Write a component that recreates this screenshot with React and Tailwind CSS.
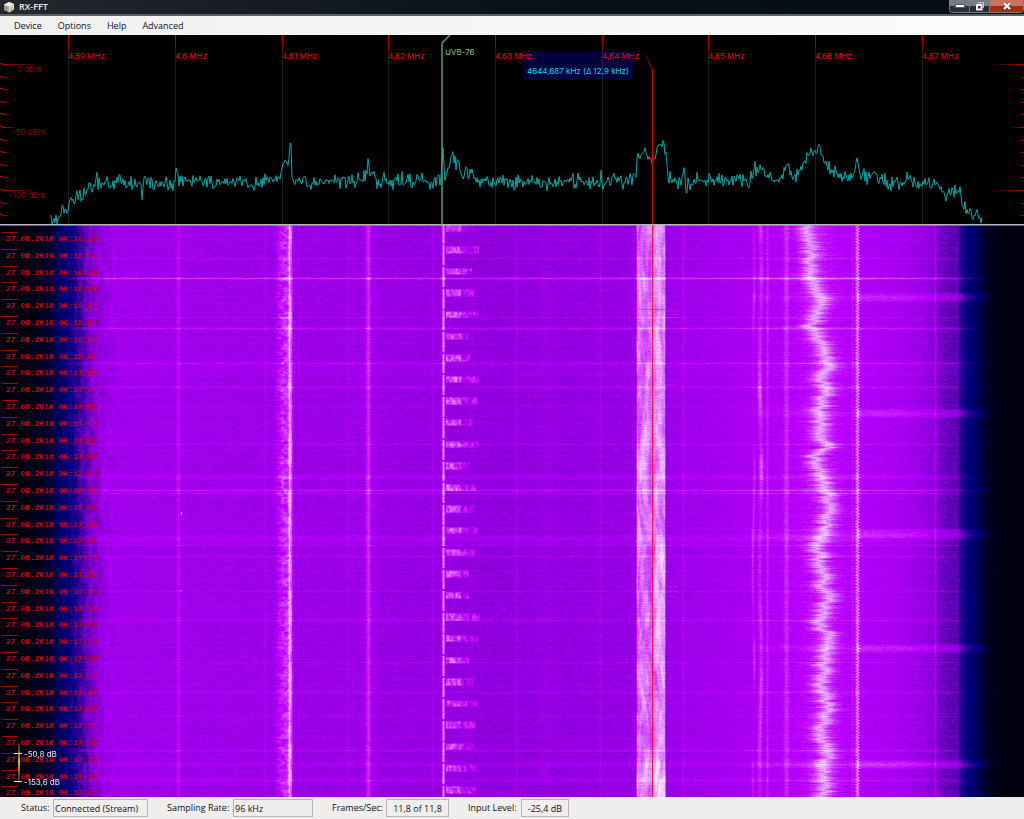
import { useLayoutEffect, useRef } from "react";

const WIDTH = 1024;
const FALL_HEIGHT = 572;

const menus = ["Device", "Options", "Help", "Advanced"];

const frequencies = [
  { x: 68, label: "4,59 MHz" },
  { x: 175, label: "4,6 MHz" },
  { x: 282, label: "4,61 MHz" },
  { x: 388, label: "4,62 MHz" },
  { x: 495, label: "4,63 MHz" },
  { x: 602, label: "4,64 MHz" },
  { x: 708, label: "4,65 MHz" },
  { x: 815, label: "4,66 MHz" },
  { x: 922, label: "4,67 MHz" },
];

const levels = [
  { x: 17, y: 37, label: "0 dBm" },
  { x: 12, y: 100, label: "-50 dBm" },
  { x: 9, y: 163, label: "-100 dBm" },
];

// small seeded generator so every render looks the same
function makeRandom(seed) {
  let s = seed;
  return () => {
    s = (s + 0x6d2b79f5) | 0;
    let t = Math.imul(s ^ (s >>> 15), 1 | s);
    t = (t + Math.imul(t ^ (t >>> 7), 61 | t)) ^ t;
    return ((t ^ (t >>> 14)) >>> 0) / 4294967296;
  };
}

function hash(x, y) {
  let h = Math.imul(x, 374761393) + Math.imul(y, 668265263);
  h = Math.imul(h ^ (h >>> 13), 1274126177);
  return ((h ^ (h >>> 16)) >>> 0) / 4294967296;
}

// smooth 2d noise between 0 and 1
function cloud(x, y) {
  const ix = Math.floor(x);
  const iy = Math.floor(y);
  const fx = (x - ix) ** 2 * (3 - 2 * (x - ix));
  const fy = (y - iy) ** 2 * (3 - 2 * (y - iy));
  const top = hash(ix, iy) * (1 - fx) + hash(ix + 1, iy) * fx;
  const bottom = hash(ix, iy + 1) * (1 - fx) + hash(ix + 1, iy + 1) * fx;
  return top * (1 - fy) + bottom * fy;
}

function interpolate(points, x) {
  if (x <= points[0][0]) return points[0][1];
  for (let i = 1; i < points.length; i++) {
    if (x <= points[i][0]) {
      const [x0, y0] = points[i - 1];
      const [x1, y1] = points[i];
      return y0 + ((y1 - y0) * (x - x0)) / (x1 - x0);
    }
  }
  return points[points.length - 1][1];
}

const bump = (x, center, width) => Math.exp(-((x - center) ** 2) / (2 * width * width));

// signal level over x, y measured from the top of the spectrum
const spectrum = [
  [51, 189], [55, 185], [58, 188], [60, 179], [66, 173], [70, 169], [75, 164], [80, 161],
  [83, 159], [87, 149], [92, 150], [97, 147], [103, 145], [115, 148], [141, 148], [142, 164],
  [144, 142], [148, 146], [160, 148], [175, 147], [177, 135], [179, 146], [220, 147], [240, 146],
  [262, 149], [270, 142], [279, 148], [281, 137], [283, 130], [285, 126], [288, 131], [289, 124],
  [290, 107], [291, 108], [292, 141], [300, 147], [320, 145], [350, 147], [363, 143], [369, 130],
  [373, 143], [385, 147], [400, 146], [430, 147], [441, 141], [443, 114], [445, 145], [449, 130],
  [452, 122], [456, 128], [459, 126], [462, 143], [468, 138], [472, 136], [478, 144], [500, 147],
  [600, 147], [601, 138], [603, 147], [634, 146], [636, 136], [638, 121], [641, 123], [644, 114],
  [648, 122], [652, 126], [655, 122], [658, 113], [661, 109], [664, 109], [666, 120], [668, 143],
  [672, 147], [682, 145], [684, 134], [686, 155], [688, 147], [720, 145], [750, 147], [755, 134],
  [760, 133], [766, 141], [775, 146], [782, 141], [787, 128], [792, 140], [800, 139], [803, 131],
  [807, 121], [812, 118], [818, 110], [821, 118], [826, 127], [832, 139], [845, 142], [852, 144],
  [855, 136], [857, 123], [860, 141], [875, 143], [890, 147], [905, 146], [920, 148], [930, 152],
  [937, 147], [941, 160], [950, 158], [957, 155], [960, 157], [962, 170], [967, 177], [972, 179],
  [977, 182], [982, 189],
];

// peaks that must not be blurred by the noise
const steady = [[140, 144], [280, 292], [441, 445], [855, 859]];

function buildTrace() {
  const random = makeRandom(7);
  const points = [];
  for (let x = 51; x <= 982; x++) {
    const quiet = steady.some(([from, to]) => x >= from && x <= to) ? 2 : x > 636 && x < 668 ? 6 : 10;
    const noise = (random() + random() - 1) * quiet;
    points.push(`${x},${Math.min(189, interpolate(spectrum, x) + noise).toFixed(1)}`);
  }
  return points.join(" ");
}

const trace = buildTrace();

const colors = [
  [0, [0, 0, 12]],
  [0.1, [0, 0, 50]],
  [0.2, [0, 0, 125]],
  [0.26, [25, 0, 135]],
  [0.42, [130, 0, 208]],
  [0.5, [158, 0, 236]],
  [0.6, [186, 0, 255]],
  [0.72, [205, 55, 255]],
  [0.85, [225, 135, 255]],
  [1, [252, 225, 255]],
];

const palette = Array.from({ length: 256 }, (_, i) =>
  [0, 1, 2].map((c) => interpolate(colors.map(([v, rgb]) => [v, rgb[c]]), i / 255))
);

// noise floor of the receiver
const floor = [
  [0, 0], [25, 0.01], [42, 0.05], [54, 0.13], [64, 0.19], [74, 0.26], [86, 0.37], [98, 0.46],
  [112, 0.51], [200, 0.5], [330, 0.49], [420, 0.475], [500, 0.46], [625, 0.475], [670, 0.495],
  [740, 0.53], [790, 0.565], [825, 0.6], [850, 0.56], [900, 0.53], [925, 0.48], [935, 0.42],
  [952, 0.36], [958, 0.31], [963, 0.24], [970, 0.19], [980, 0.13], [990, 0.05], [1000, 0.01],
  [1024, 0.01],
];

// [x, width, gain]
const carriers = [
  [178, 1.5, 0.11], [265, 0.8, 0.05], [348, 0.8, 0.04], [353, 0.8, 0.03], [368, 1.6, 0.1],
  [368, 5, 0.03], [432, 0.8, 0.05], [472, 0.7, 0.02], [516, 0.8, 0.06], [545, 5, 0.02],
  [600, 0.8, 0.06], [683, 0.8, 0.08], [767, 1, 0.11], [786, 1.8, 0.12], [852, 0.9, 0.07],
  [935, 0.9, 0.12], [956, 1.6, 0.05],
];

// [y, width, gain]
const flashes = [
  [33, 0.5, 0.06], [53, 0.8, 0.2], [92, 0.5, 0.05], [103, 0.9, 0.12], [138, 0.7, 0.11],
  [146, 5, 0.025], [162, 1, 0.07], [181, 0.6, 0.04], [219, 0.7, 0.07], [252, 1.6, 0.07],
  [265, 0.7, 0.14], [268, 0.6, 0.1], [313, 2.4, 0.07], [320, 0.6, 0.07], [331, 0.8, 0.06],
  [366, 0.6, 0.04], [395, 0.6, 0.07], [437, 0.6, 0.06], [467, 0.9, 0.06], [491, 0.6, 0.03],
  [525, 0.7, 0.07], [539, 1, 0.06], [555, 0.8, 0.07],
];

// slow drift of the wide signal around 4,66 MHz
const drift = [
  [0, 808], [20, 812], [35, 811], [48, 807], [62, 815], [78, 823], [88, 816], [100, 809],
  [114, 818], [128, 823], [140, 830], [150, 820], [165, 824], [175, 820], [195, 819], [212, 821],
  [222, 826], [230, 815], [250, 821], [270, 827], [300, 829], [310, 821], [330, 816], [350, 823],
  [375, 828], [390, 823], [397, 817], [410, 831], [425, 822], [445, 824], [465, 821], [480, 827],
  [505, 820], [530, 825], [550, 821], [572, 825],
];

function drawWaterfall(canvas) {
  const ctx = canvas.getContext("2d");
  const image = ctx.createImageData(WIDTH, FALL_HEIGHT);
  const random = makeRandom(2010);
  const xFloor = Array.from({ length: WIDTH }, (_, x) => {
    let v = interpolate(floor, x);
    carriers.forEach(([cx, w, gain]) => (v += gain * bump(x, cx, w)));
    return v;
  });
  let wander = 0;
  let keyed = 0;

  for (let y = 0; y < FALL_HEIGHT; y++) {
    let row = (random() - 0.5) * 0.026;
    flashes.forEach(([fy, w, gain]) => (row += gain * bump(y, fy, w)));
    wander = wander * 0.4 + (random() - 0.5) * 11;
    const center = interpolate(drift, y) + wander * 0.6 + (cloud(40, y / 5) - 0.5) * 6;
    const tailLeft = 6 + random() * 13;
    const tailRight = 6 + random() * 13;
    const burst = (y + 1) % 21.6;
    const burstOn = burst < 7.5;
    if (Math.floor(burst) === 0) keyed = random() * 12;
    const beat = y % 3 === 0 ? 1 : -0.5;
    const smear = (random() - 0.5) * 3;
    let grain = 0;

    for (let x = 0; x < WIDTH; x++) {
      grain = grain * 0.35 + (random() - 0.5) * 0.065;
      const inside = Math.min(1, Math.max(0, (x - 30) / 75)) * Math.min(1, Math.max(0, (1000 - x) / 60));
      let v = xFloor[x] + row * inside + grain * (0.35 + 0.65 * inside);

      // soft ripples on the left slope
      if (x > 64 && x < 116) v += 0.09 * (cloud(x / 3, y / 14) - 0.5);

      // smeared signal left of its carrier
      if (x > 270 && x < 290) {
        const body = Math.min(1, Math.max(0, (x - 273 + smear) / 9));
        v += body * (0.08 + 0.2 * cloud(x / 3 + smear * 0.2, y / 2.5));
      }
      v += (0.28 + 0.16 * cloud(3, y / 9)) * bump(x, 290, 1.4);
      if (x > 360 && x < 376) v += 0.08 * bump(x, 368 + beat, 1.8);

      // station marker carrier and its pulses
      const gap = burst > 19.3 && burst < 21;
      v += (gap ? 0.16 : 0.4) * bump(x, 443, 1.1);
      if (burstOn && x > 445 && x < 468 + keyed) {
        const wave = cloud(x / 2, y / 4) - 0.5;
        const edge = burst < 1 || burst > 6.5 ? 0.7 : 1;
        v += edge * (x < 461 ? 0.26 + wave * 0.22 : 0.14 + wave * 0.24);
      }

      // wide modulated band
      if (x >= 636 && x <= 665) {
        const bend = Math.sin(y / 29) * 2.5 + Math.sin(y / 13);
        const wide = cloud((x + bend) / 5, y / 30) - 0.5;
        const fine = cloud((x + bend) / 2.2 + 90, y / 12) - 0.5;
        const side = x === 636 || x === 665 ? 0.14 : 0.33;
        v += side + wide * 0.17 + fine * 0.12;
        v += 0.04 * bump(x, 660, 4) + 0.09 * bump(y, 560, 16);
        v -= 0.05 * bump(x, 650, 1.5);
      }
      // faint splatter beside the band
      if (x > 665 && x < 678 && [86, 89, 92, 155, 159, 361, 366, 371].includes(y)) v += 0.1;

      if (x > 745 && x < 775) {
        const bend = Math.sin(y / 31) * 0.8;
        v += 0.16 * cloud(1, y / 40) * bump(x, 753 + bend, 1);
        v += (0.09 + 0.17 * cloud(9, y / 24)) * bump(x, 760 + bend, 1.6);
      }

      // the drifting signal
      const d = x - center;
      const tail = d < 0 ? tailLeft : tailRight;
      v += 0.19 * bump(d, 0, 6.5) + 0.11 * Math.exp(-Math.abs(d) / tail);

      v += 0.27 * bump(x, 857 + beat * 0.8, 1.3);

      // periodic bursts on the right
      if (x > 750) {
        const near = Math.min(...[72, 188, 308, 423, 539].map((s) => Math.abs(y - s)));
        if (near < 5) {
          const gain = x > 856 ? 0.13 : 0.04;
          v += gain * (1 - near / 9) * Math.min(1, Math.max(0, (1000 - x) / 40)) * (0.85 + random() * 0.3);
        }
      }

      if (Math.abs(x - 181) < 2 && (Math.abs(y - 288) < 2 || y === 365)) v += x === 181 ? 0.3 : 0.1;

      const [r, g, b] = palette[Math.min(255, Math.max(0, Math.round(v * 255)))];
      const p = (y * WIDTH + x) * 4;
      image.data[p] = r;
      image.data[p + 1] = g;
      image.data[p + 2] = b;
      image.data[p + 3] = 255;
    }
  }
  ctx.putImageData(image, 0, 0);
}

function stamp(i) {
  const seconds = Math.floor(73.6 - i * 1.788);
  const minute = seconds >= 60 ? 18 : 17;
  return `27.08.2010 00:${minute}:${String(seconds % 60).padStart(2, "0")}`;
}

function TitleBar() {
  return (
    <header className="flex h-4 items-start justify-between border-b-2 border-[#5d6063] bg-linear-to-r from-[#24282e] via-[#0a1119] to-[#050d14]">
      <div className="flex h-[14px] items-center gap-1 pl-[3px]">
        <svg viewBox="0 0 12 12" className="size-3" aria-hidden="true">
          <path d="M1 3.5 6 1l5 2v5.500L6 11.500 1 9z" fill="#aaa89f" />
          <path d="M1 3.5 6 1l5 2-5 2.500z" fill="#f2f1e9" />
          <path d="M6 5.5 11 3v5.500l-5 3z" fill="#dedbd2" />
          <path d="M7.5 6.5 9.5 5v1.500L8 8z" fill="#d2a861" />
          <path d="M2 5v3M3.5 6v3.500M7 9.500l3-1.600" stroke="#77756f" strokeWidth=".7" />
        </svg>
        <h1 className="text-[9px] leading-3 font-semibold text-[#e9edf0]">RX-FFT</h1>
      </div>
      <div className="flex h-[13px] overflow-hidden rounded-b-sm border border-t-0 border-[#777b82]">
        <button
          type="button"
          aria-label="Minimize"
          className="flex w-5 items-center justify-center border-r border-[#777b82] bg-linear-to-b from-[#787b82] from-50% to-[#292c34] to-50%"
        >
          <svg viewBox="0 0 10 4" className="h-1 w-2.5">
            <rect x=".5" y=".5" width="9" height="3" fill="#fff" stroke="#555865" />
          </svg>
        </button>
        <button
          type="button"
          aria-label="Restore"
          className="flex w-5 items-center justify-center border-r border-[#777b82] bg-linear-to-b from-[#787b82] from-50% to-[#292c34] to-50%"
        >
          <svg viewBox="0 0 10 10" className="size-2.5" fill="none" stroke="#f4f4f4">
            <path d="M3.5 2.5v-1h5v5h-1" stroke="#c9cbd0" />
            <path d="M2 4h4.500v4.500H2z" strokeWidth="2" />
          </svg>
        </button>
        <button
          type="button"
          aria-label="Close"
          className="flex w-[33px] items-center justify-center bg-linear-to-b from-[#c9745f] from-50% to-[#a52d13] to-50%"
        >
          <svg viewBox="0 0 10 8" className="h-2 w-2.5" fill="none">
            <path d="m2 1 6 6M8 1 2 7" stroke="#59464a" strokeWidth="3.4" />
            <path d="m2 1 6 6M8 1 2 7" stroke="#fff" strokeWidth="2" />
          </svg>
        </button>
      </div>
    </header>
  );
}

function Spectrum() {
  return (
    <svg
      viewBox="0 0 1024 190"
      className="block h-auto w-full bg-black font-[Inter,sans-serif] text-[8px]"
      role="img"
      aria-label="Spectrum"
    >
      <defs>
        <linearGradient id="tick" x1="0" y1="0" x2="0" y2="20" gradientUnits="userSpaceOnUse">
          <stop offset="0" stopColor="#d00000" />
          <stop offset="1" stopColor="#500000" />
        </linearGradient>
        <linearGradient id="fade-left">
          <stop offset="0" stopColor="#c00000" />
          <stop offset="1" stopColor="#c00000" stopOpacity="0" />
        </linearGradient>
        <linearGradient id="fade-right">
          <stop offset="0" stopColor="#c00000" stopOpacity="0" />
          <stop offset="1" stopColor="#c00000" />
        </linearGradient>
        <linearGradient id="hook" x1="0" y1="19" x2="0" y2="35" gradientUnits="userSpaceOnUse">
          <stop offset="0" stopColor="#400000" />
          <stop offset="1" stopColor="#d80000" />
        </linearGradient>
      </defs>

      {frequencies.map(({ x }) => (
        <g key={x}>
          <rect x={x} y="0" width="1" height="189" fill="#1e1e1e" />
          <rect x={x} y="0" width="1" height="19" fill="url(#tick)" />
        </g>
      ))}

      {Array.from({ length: 13 }, (_, i) => {
        const size = i % 10 === 0 ? 42 : i === 5 ? 17 : 9;
        const right = i % 10 === 0 ? 34 : i === 5 ? 14 : 6;
        const y = 29 + Math.round(i * 12.6);
        return (
          <g key={i}>
            <rect x="0" y={y - 1} width="3" height="1" fill="#900000" />
            <rect x="2" y={y} width={size} height="1" fill="url(#fade-left)" />
            <rect x={1024 - right} y={y} width={right} height="1" fill="url(#fade-right)" />
          </g>
        );
      })}

      {levels.map(({ x, y, label }) => (
        <text key={label} x={x} y={y} fill="#8c0000">
          {label}
        </text>
      ))}

      <rect x="523" y="17" width="110" height="28" fill="#00003c" />
      <rect x="602" y="17" width="1" height="28" fill="#1c1c50" />
      {frequencies.map(({ x, label }) => (
        <text key={label} x={x} y="24" fill="#f00000">
          {label}
        </text>
      ))}
      <text x="527" y="39" fill="#00d8ec">
        4644,687 kHz (Δ 12,9 kHz)
      </text>

      <polyline points={trace} fill="none" stroke="#00a8a8" strokeWidth="1" />

      <path d="M442 189V8l8-8" fill="none" stroke="#5f9f62" strokeWidth="1.5" />
      <text x="445" y="20" fill="#7cc881">
        UVB-76
      </text>
      <path d="m645 19 7.500 16" fill="none" stroke="url(#hook)" />
      <rect x="652" y="35" width="1" height="155" fill="#e00000" />
      <path d="M649 123.500h7" stroke="#e00000" />
      <rect x="0" y="189" width="1024" height="1" fill="#b5b5bd" />
    </svg>
  );
}

function Waterfall() {
  const canvasRef = useRef(null);

  useLayoutEffect(() => {
    drawWaterfall(canvasRef.current);
  }, []);

  return (
    <div className="relative">
      <canvas ref={canvasRef} width={WIDTH} height={FALL_HEIGHT} className="block h-auto w-full" />
      <svg viewBox="0 0 1024 572" className="absolute inset-0 size-full" role="img" aria-label="Waterfall">
        <defs>
          <linearGradient id="range" x1="0" y1="0" x2="0" y2="1">
            <stop offset="0" stopColor="#ffa500" stopOpacity="0" />
            <stop offset=".5" stopColor="#ffb400" />
            <stop offset="1" stopColor="#ffa500" stopOpacity="0.1" />
          </linearGradient>
          <linearGradient id="cross">
            <stop offset="0" stopColor="#ff2040" stopOpacity="0" />
            <stop offset=".5" stopColor="#ff2040" stopOpacity=".8" />
            <stop offset="1" stopColor="#ff2040" stopOpacity="0" />
          </linearGradient>
        </defs>
        <g className="font-['Liberation_Mono',monospace] text-[8px] font-bold" fill="#d20010">
          {Array.from({ length: 34 }, (_, i) => {
            const y = 7 + Math.round(i * 16.8);
            return (
              <g key={i}>
                <rect x="2" y={y} width="16" height="1" fill="#b40000" />
                <text x="6" y={y + 9}>
                  {stamp(i)}
                </text>
              </g>
            );
          })}
        </g>
        <rect x="0" y="0" width="1024" height="1" fill="#c9b4d8" fillOpacity=".5" />
        <rect x="652" y="0" width="1" height="572" fill="#ff1030" />
        <rect x="620" y="84" width="66" height="1" fill="url(#cross)" />
        <g className="font-[Inter,sans-serif] text-[8px]" fill="#e8e8f0">
          <rect x="18" y="515" width="2" height="44" fill="url(#range)" />
          <rect x="14" y="528" width="8" height="1" />
          <rect x="14" y="556" width="8" height="1" />
          <text x="24" y="532">-50,8 dB</text>
          <text x="24" y="560">-153,6 dB</text>
        </g>
      </svg>
    </div>
  );
}

function StatusBar() {
  const field = "h-[18px] border border-[#b4b4b4] bg-[#f0eded] outline-none";
  return (
    <footer className="flex h-[22px] items-center gap-[19px] bg-[#f0eded] pl-[21px] text-[9px] leading-3 text-[#111]">
      <div className="flex items-center gap-1">
        <label htmlFor="status" className="w-7 whitespace-nowrap">Status:</label>
        <input id="status" readOnly value="Connected (Stream)" className={`${field} w-[95px] px-px`} />
      </div>
      <div className="flex items-center gap-1">
        <label htmlFor="rate" className="w-[62px] whitespace-nowrap">Sampling Rate:</label>
        <input id="rate" readOnly value="96 kHz" className={`${field} w-20 px-px`} />
      </div>
      <div className="flex items-center gap-1">
        <label htmlFor="frames" className="w-[50px] whitespace-nowrap">Frames/Sec:</label>
        <input id="frames" readOnly value="11,8 of 11,8" className={`${field} w-[63px] text-center`} />
      </div>
      <div className="flex items-center gap-1">
        <label htmlFor="level" className="w-[49px] whitespace-nowrap">Input Level:</label>
        <input id="level" readOnly value="-25,4 dB" className={`${field} w-12 text-center`} />
      </div>
    </footer>
  );
}

export default function App() {
  return (
    <div className="flex flex-col bg-black font-['Open_Sans',sans-serif]">
      <TitleBar />
      <nav className="flex h-[19px] items-center gap-4 bg-linear-to-r from-[#f0f0f0] to-[#fcfcfc] pl-3.5 text-[9px] leading-3 text-[#111]">
        {menus.map((menu) => (
          <button key={menu} type="button">
            {menu}
          </button>
        ))}
      </nav>
      <main>
        <Spectrum />
        <Waterfall />
      </main>
      <StatusBar />
    </div>
  );
}
